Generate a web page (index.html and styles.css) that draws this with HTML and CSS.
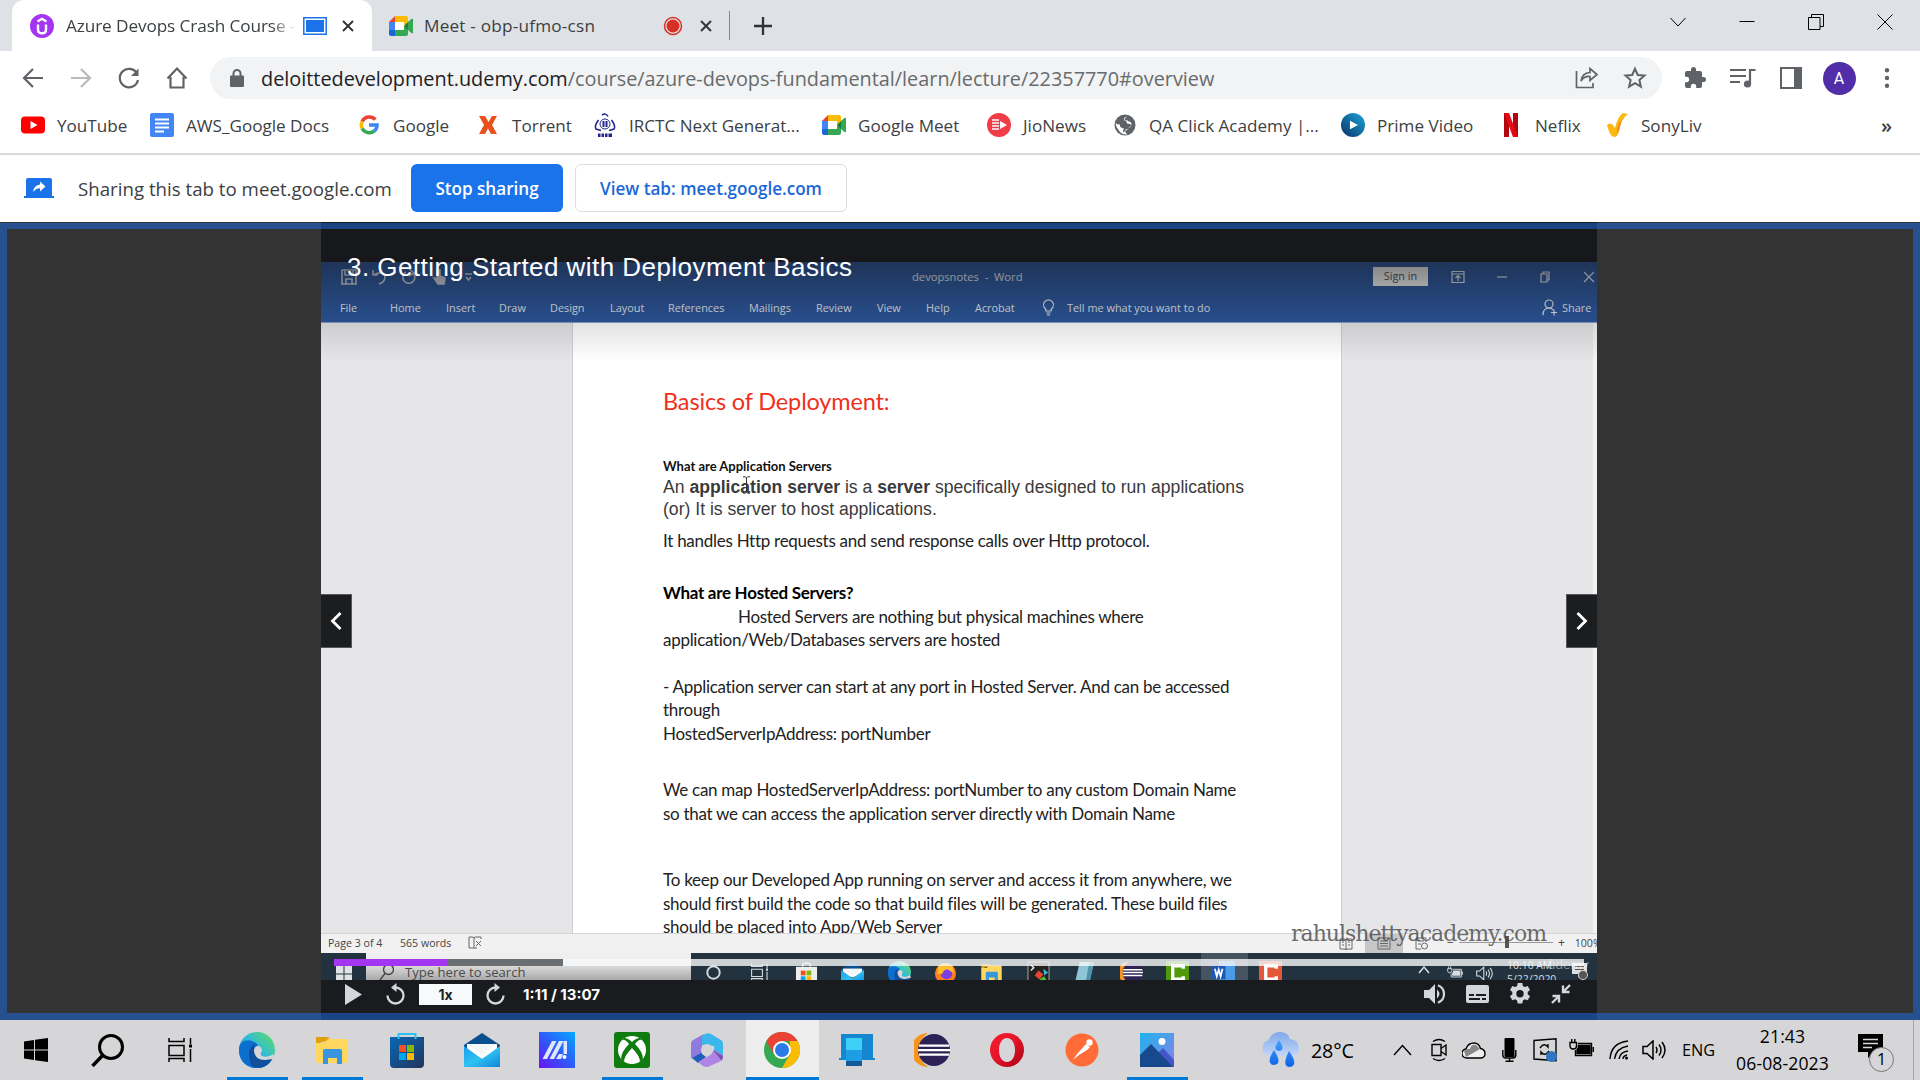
FILE: index.html
```html
<!DOCTYPE html>
<html lang="en">
<head>
<meta charset="utf-8">
<title>Azure Devops Crash Course</title>
<link rel="stylesheet" href="styles.css">
</head>
<body>
<svg class="defs" aria-hidden="true">
  <defs>
    <linearGradient id="gEdge" x1="0" y1="1" x2="1" y2="0"><stop offset="0" stop-color="#0f7ad8"/><stop offset=".5" stop-color="#2fb9e0"/><stop offset="1" stop-color="#5de05a"/></linearGradient>
    <linearGradient id="gStore" x1="0" y1="0" x2="1" y2="1"><stop offset="0" stop-color="#0a67b5"/><stop offset="1" stop-color="#22355c"/></linearGradient>
    <linearGradient id="gMail" x1="0" y1="0" x2="1" y2="1"><stop offset="0" stop-color="#1a9de6"/><stop offset=".5" stop-color="#2fc2f4"/><stop offset="1" stop-color="#1283da"/></linearGradient>
    <linearGradient id="gAsus" x1="0" y1="1" x2="1" y2="0"><stop offset="0" stop-color="#6a12f5"/><stop offset=".5" stop-color="#2d5cf8"/><stop offset="1" stop-color="#05a8ff"/></linearGradient>
    <linearGradient id="gOpera" x1="0" y1="0" x2="1" y2="1"><stop offset="0" stop-color="#ff1b2d"/><stop offset=".5" stop-color="#e0142a"/><stop offset="1" stop-color="#a70014"/></linearGradient>
    <linearGradient id="gPrime" x1="1" y1="0" x2="0" y2="1"><stop offset="0" stop-color="#1ba8dc"/><stop offset="1" stop-color="#0b2f66"/></linearGradient>
    <linearGradient id="gPhoto" x1="0" y1="0" x2="1" y2="1"><stop offset="0" stop-color="#1fb4ef"/><stop offset="1" stop-color="#8a7fe0"/></linearGradient>
    <linearGradient id="gDrop" x1="0" y1="0" x2="0" y2="1"><stop offset="0" stop-color="#4aa0ff"/><stop offset="1" stop-color="#0a63e8"/></linearGradient>
    <linearGradient id="gCloud" x1="0" y1="0" x2="0" y2="1"><stop offset="0" stop-color="#7fa9ea"/><stop offset="1" stop-color="#c3d6f7"/></linearGradient>
    <symbol id="meet" viewBox="0 0 24 20"><path fill="#ea4335" d="M0 6 6 0v6z"/><path fill="#fbbc04" d="M6 0h11a2 2 0 0 1 2 2v5l-4 3V6H6z"/><path fill="#4285f4" d="M0 6h6v8H0z"/><path fill="#1967d2" d="M0 14h6v6H2a2 2 0 0 1-2-2z"/><path fill="#34a853" d="M6 14h9v-4l4 3v5a2 2 0 0 1-2 2H6zM19 6l3.300-2.900Q24 2 24 3.500v13q0 1.500-1.700.4L19 14z"/><path fill="#188038" d="m15 10 4-4v8z"/><path fill="#fff" d="M6 6h9v8H6z"/></symbol>
    <symbol id="edge" viewBox="0 0 36 36"><circle cx="18" cy="18" r="18" fill="url(#gEdge)"/><path fill="#0c6fd0" d="M0 18C0 9 8 7 13 9c8 3 7 7 3 11-3 6 2 12 8 12 4 0 6-2 8-4-5 9-16 10-23 6C3 31 0 25 0 18z"/><path fill="#114f9c" d="M10 22c0-5 3-9 6-10-3 7 1 15 9 15 4 0 6-2 8 0-4 8-13 11-20 7-2-3-3-7-3-12z"/><path fill="#d5d5d7" d="M15 18c0-2 2-4 4-4s4 2 4 4-2 3-1 5c2 3 9 2 12-1l2 4-3 1c-2 0-4 1-7 1-8 0-11-5-11-10z"/></symbol>
    <symbol id="folder" viewBox="0 0 36 36"><path fill="#e0a106" d="M2 5h12l3 4h-5L2 12z"/><path fill="#ffd75e" d="M2 11h8l4-4h18q2 0 2 2v20q0 2-2 2H4q-2 0-2-2z"/><path fill="#3896e0" d="M9 19q0-2 2-2h15q2 0 2 2v13h-5v-6h-9v6H9z"/></symbol>
    <symbol id="taskview" viewBox="0 0 24 24"><path fill="none" stroke="currentColor" stroke-width="1.500" d="M1 0v3.500h15V0M1 7.500h15v10H1zM1 24v-3.500h15V24M22.500 0v6M22.500 11v13"/><path fill="currentColor" d="M21 6.500h3v3h-3z"/></symbol>
    <symbol id="win" viewBox="0 0 24 24"><path fill="currentColor" d="M0 3.500 10 2v9.500H0zM11 1.800 24 0v11.500H11zM0 12.500h10V22L0 20.500zM11 12.500h13V24l-13-1.800z"/></symbol>
    <symbol id="search" viewBox="0 0 33 33"><circle cx="20" cy="13" r="11.500" fill="none" stroke="currentColor" stroke-width="3"/><path stroke="currentColor" stroke-width="3.400" d="M12 21 1.500 32"/></symbol>
    <symbol id="mail" viewBox="0 0 36 34"><path fill="#0c4f8f" d="M0 12 18 0l18 12v4H0z"/><path fill="#fff" d="M3 11h30v8L18 25 3 19z"/><path fill="url(#gMail)" d="m0 13 18 13 18-13v21H0z"/><path fill="#f4f6f8" d="M4 11h28L18 22z"/></symbol>
    <symbol id="speaker" viewBox="0 0 24 20"><path fill="none" stroke="currentColor" stroke-width="1.500" d="M1 6.500h4L11 1v18l-6-5.500H1zM14 7q2 3 0 6M17 4.500q4 5.500 0 11M20 2q6 8 0 16"/></symbol>
    <symbol id="battery" viewBox="0 0 25 19"><path fill="none" stroke="currentColor" stroke-width="1.400" d="M9 4.500h13.500v12H6.500V11M24.300 8v5M1 3.500h6.500v3.500q0 3-3.200 3T1 7zM2.700 0v3.500M5.800 0v3.500"/><path fill="currentColor" d="M9.500 6.500h11.500v8H8v-4q2-1.500 1.500-4z"/></symbol>
    <symbol id="eclipse" viewBox="0 0 36 36"><path fill="#f7941e" d="M14 1a17 17 0 0 0 0 34q-9-6-9-17t9-17z"/><circle cx="20" cy="18" r="16" fill="#2c2255"/><path fill="#fff" d="M5 12.500h30v2.200H5zM4 17h32v2.200H4zM5 21.500h30v2.200H5z"/></symbol>
  </defs>
</svg>

<header class="tabstrip">
  <div class="tab tab-active">
    <svg class="i24" viewBox="0 0 24 24"><circle cx="12" cy="12" r="12" fill="#a435f0"/><path fill="none" stroke="#fff" stroke-width="2.400" d="M8 10.500v5q0 3.800 4 3.800t4-3.800v-5M7.500 7.500 12 4.800l4.500 2.700"/></svg>
    <span class="tab-name tab-fade">Azure Devops Crash Course -</span>
    <svg class="tab-state" viewBox="0 0 24 18" width="24" height="18"><path fill="#fff" stroke="#1a73e8" stroke-width="1.500" d="M.8.8h22.400v16.400H.8z"/><path fill="#1a73e8" d="M3 3h18v12H3z"/></svg>
    <svg class="tab-x" viewBox="0 0 12 12"><path d="m1 1 10 10M11 1 1 11"/></svg>
  </div>
  <div class="tab tab-idle">
    <svg width="24" height="20"><use href="#meet"/></svg>
    <span class="tab-name">Meet - obp-ufmo-csn</span>
    <svg width="20" height="20" viewBox="0 0 20 20"><circle cx="10" cy="10" r="8.500" fill="none" stroke="#d93025" stroke-width="1.500"/><circle cx="10" cy="10" r="6.500" fill="#d93025"/></svg>
    <svg class="tab-x" viewBox="0 0 12 12"><path d="m1 1 10 10M11 1 1 11"/></svg>
  </div>
  <svg class="new-tab" viewBox="0 0 18 18"><path d="M9 0v18M0 9h18"/></svg>
  <div class="window-buttons">
    <svg width="16" height="16" viewBox="0 0 16 16"><path d="m.5 4 7.500 8 7.500-8"/></svg>
    <svg width="16" height="16" viewBox="0 0 16 16"><path d="M.5 7.500h15"/></svg>
    <svg width="16" height="16" viewBox="0 0 16 16"><path d="M.5 3.500h11.500v12H.5zM3.500 3.500v-3h12v12H12"/></svg>
    <svg width="16" height="16" viewBox="0 0 16 16"><path d="m.5.5 15 15M15.500.5l-15 15"/></svg>
  </div>
</header>

<div class="toolbar">
  <div class="nav">
    <svg viewBox="0 0 24 24"><path d="M22 12H3M12 3l-9 9 9 9"/></svg>
    <svg class="dim" viewBox="0 0 24 24"><path d="M2 12h19M12 3l9 9-9 9"/></svg>
    <svg viewBox="0 0 24 24"><path d="M20 7.500A9.200 9.200 0 1 0 21 14"/><path d="M21.500 2.500v7.500h-7.500z" fill="#5f6368" stroke="none"/></svg>
    <svg viewBox="0 0 24 24"><path d="M5.500 11v10.500h13V11M2.500 12.500 12 2.500l9.500 10"/></svg>
  </div>
  <div class="omnibox">
    <svg width="14" height="18" viewBox="0 0 14 18"><path fill="#5f6368" d="M1 6.500h12q1 0 1 1V17q0 1-1 1H1q-1 0-1-1V7.500q0-1 1-1z"/><path fill="none" stroke="#5f6368" stroke-width="2" d="M3.500 7V4.500a3.500 3.500 0 0 1 7 0V7"/></svg>
    <span class="url"><b>deloittedevelopment.udemy.com</b>/course/azure-devops-fundamental/learn/lecture/22357770#overview</span>
    <svg class="o-share" width="24" height="24" viewBox="0 0 24 24"><path d="M1.500 5v16.500H18V17M6 15q1-8 9-8.500V2.500l7 6-7 6v-4Q9 10 6 15z"/></svg>
    <svg class="o-star" width="24" height="24" viewBox="0 0 24 24"><path d="m12 2.800 2.800 6.200 6.700.6-5.100 4.500 1.500 6.600L12 17.200l-5.900 3.500 1.500-6.600-5.100-4.500 6.700-.6z"/></svg>
  </div>
  <div class="actions">
    <svg width="24" height="24" viewBox="0 0 24 24"><path fill="#5f6368" d="M20.500 11H19V7a2 2 0 0 0-2-2h-4V3.500a2.500 2.500 0 0 0-5 0V5H4a2 2 0 0 0-2 2v3.800h1.500a2.700 2.700 0 0 1 0 5.400H2V20c0 1.100.9 2 2 2h3.800v-1.500a2.700 2.700 0 0 1 5.400 0V22H17a2 2 0 0 0 2-2v-4h1.500a2.500 2.500 0 0 0 0-5z"/></svg>
    <svg width="26" height="22" viewBox="0 0 26 22"><path fill="none" stroke="#5f6368" stroke-width="2.200" d="M0 3h16M0 9h16M0 15h10M20 17V3h5.500"/><circle cx="17.500" cy="17" r="3.600" fill="#5f6368"/></svg>
    <svg width="22" height="22" viewBox="0 0 22 22"><path fill="none" stroke="#5f6368" stroke-width="2" d="M1 1h20v20H1z"/><path fill="#5f6368" d="M14 1h7v20h-7z"/></svg>
    <span class="avatar">A</span>
    <svg width="6" height="20" viewBox="0 0 6 20"><g fill="#5f6368"><circle cx="3" cy="2.300" r="2.200"/><circle cx="3" cy="10" r="2.200"/><circle cx="3" cy="17.700" r="2.200"/></g></svg>
  </div>
</div>

<nav class="bookmarks">
  <a><svg class="i24" viewBox="0 0 24 24"><rect y="3.500" width="24" height="17" rx="4" fill="#f00"/><path fill="#fff" d="m9.500 8 7 4-7 4z"/></svg>YouTube</a>
  <a><svg class="i24" viewBox="0 0 24 24"><rect width="24" height="24" rx="2" fill="#4285f4"/><path stroke="#fff" stroke-width="2" d="M5 6.500h14M5 10.500h14M5 14.500h14M5 18.500h9"/></svg>AWS_Google Docs</a>
  <a><svg class="i24" viewBox="0 0 24 24"><g fill="none" stroke-width="3.600"><path stroke="#ea4335" d="M18.300 6.600A8 8 0 0 0 5.200 8.500"/><path stroke="#fbbc05" d="M5.200 8.500a8 8 0 0 0 0 7"/><path stroke="#34a853" d="M5.200 15.500a8 8 0 0 0 12 2.500"/><path stroke="#4285f4" d="M12 12h8q0 4-2.800 6"/></g></svg>Google</a>
  <a><svg class="i24" viewBox="0 0 24 24"><path fill="#e8501c" d="M3 3h6l3.500 6L16 3h5l-5 9 5 9h-6l-3-5.500L9 21H3l5-9z"/></svg>Torrent</a>
  <a><svg class="i24" viewBox="0 0 24 24"><g fill="none" stroke="#23238e" stroke-width="1.500"><path d="M9 2q4-2.500 6 1.500M5.500 7Q1 13 3 16l5 1.500M18.500 7Q23 13 21 16l-5 1.500"/><circle cx="12" cy="11" r="5" stroke-width="1"/></g><path fill="#23238e" d="M9.500 8h2v6h-2zM12.500 8h2v6h-2zM5 20.500h2.500V24H5zM8.500 20.500H11V24H8.500zM12 20.500h2.500V24H12zM15.500 20.500H19V24h-3.500z"/></svg>IRCTC Next Generat...</a>
  <a><svg class="i24" viewBox="0 -2 24 24"><use href="#meet" width="24" height="20"/></svg>Google Meet</a>
  <a><svg class="i24" viewBox="0 0 24 24"><circle cx="12" cy="12" r="12" fill="#f23c48"/><path stroke="#fff" stroke-width="1.500" d="M5 7h7M5 10h7M5 13h7M5 16h7"/><path fill="#fff" d="m13 8 7 4-7 4z"/></svg>JioNews</a>
  <a><svg class="i24" viewBox="0 0 24 24"><circle cx="12" cy="12" r="10.500" fill="#5f6368"/><path fill="#fff" d="M14 3.500q-4 1-3 4 3 0 3 3 4 0 4 2-4 5-8 7 0-3 1-4-5-1-4-4-3 0-4.500-1.500Q3 14 5.500 17q3 5 9 4.500-3-2-2-5 5-1 6-5 0-3-3-3-1-2-4-1 0-2 2.500-4z"/></svg>QA Click Academy |...</a>
  <a><svg class="i24" viewBox="0 0 24 24"><circle cx="12" cy="12" r="12" fill="url(#gPrime)"/><path fill="#fff" d="m9 7.800 8 4.200-8 4.200z"/></svg>Prime Video</a>
  <a><svg class="i24" viewBox="0 0 24 24"><path fill="#b1060f" d="M5 0h5v24H5zM14 0h5v24h-5z"/><path fill="#e50914" d="M5 0h5l9 24h-5z"/></svg>Neflix</a>
  <a><svg class="i24" viewBox="0 0 24 24"><path fill="#fbb811" d="M2 12q3-3 6 0l2 3Q13 3 18 0l5 1q-7 5-9 17-1 6-5 6t-7-12z"/><path fill="#f28a1b" d="M14 10q4-3 5-6-3 3-5 14l-2 2q0-6 2-10z"/></svg>SonyLiv</a>
  <span class="more">»</span>
</nav>

<div class="sharebar">
  <svg width="30" height="20" viewBox="0 0 30 20"><path fill="#1a73e8" d="M4 0h22q2 0 2 2v16h2v2H0v-2h2V2q0-2 2-2z"/><path fill="#fff" d="M9 14q1-7 7-7.500V3.500l5.500 5-5.500 5v-3.300Q12 10 9 14z"/></svg>
  <span class="share-text">Sharing this tab to meet.google.com</span>
  <button class="btn btn-stop">Stop sharing</button>
  <button class="btn btn-view">View tab: meet.google.com</button>
</div>

<main class="stage">
  <section class="player">
    <div class="letterbox"></div>
    <div class="word">
      <div class="word-title">
        <div class="quick">
          <svg viewBox="0 0 16 16"><path d="M1 1h14v14H1zM4 1v5h8V1M5 15v-5h6v5"/></svg>
          <svg viewBox="0 0 16 16"><path d="M2 1v5h5M2 6q11-5 12 2 0 5-6 7"/></svg>
          <svg viewBox="0 0 16 16"><path d="M5 3a6 6 0 1 0 7 1M8 0l5 4-5 3"/></svg>
          <svg viewBox="0 0 16 16"><path fill="#c8cdd8" d="M6 1h3v6l5 2-1 6H7L3 9l3 1z"/></svg>
          <svg viewBox="0 0 16 16"><path d="M4 5h7M5 8l2.500 3L10 8"/></svg>
        </div>
        <span class="word-doc">devopsnotes&nbsp; - &nbsp;Word</span>
        <span class="signin">Sign in</span>
        <div class="word-buttons">
          <svg viewBox="0 0 14 14"><path d="M1 1.500h12v11H1zM1 4h12M7 11V6M4.500 8 7 5.500 9.500 8"/></svg>
          <svg viewBox="0 0 14 14"><path d="M2 7h10"/></svg>
          <svg viewBox="0 0 14 14"><path d="M3 4h6v8H3zM5 4V2h6v8H9"/></svg>
          <svg viewBox="0 0 14 14"><path d="m2 2 10 10M12 2 2 12"/></svg>
        </div>
      </div>
      <div class="ribbon">
        <span>File</span><span>Home</span><span>Insert</span><span>Draw</span><span>Design</span><span>Layout</span><span>References</span><span>Mailings</span><span>Review</span><span>View</span><span>Help</span><span>Acrobat</span>
        <svg width="13" height="17" viewBox="0 0 13 17"><path d="M4 12q0-2-2-4a5 5 0 1 1 9 0q-2 2-2 4zM4.500 14h4M5 16h3"/></svg>
        <span>Tell me what you want to do</span>
        <svg width="16" height="17" viewBox="0 0 16 17"><circle cx="7" cy="5" r="4"/><path d="M1 16q0-7 6-7 3 0 4 2M9 13.500h6M12 10.500v6"/></svg>
        <span>Share</span>
      </div>
    </div>

    <div class="desk">
      <article class="page">
        <h1>Basics of Deployment:</h1>
        <h3>What are Application Servers</h3>
        <p class="arial">An <b>application server</b> is a <b>server</b> specifically designed to run applications<br>(or) It is server to host applications.</p>
        <p class="after-arial">It handles Http requests and send response calls over Http protocol.</p>
        <h2>What are Hosted Servers?</h2>
        <p class="indented">Hosted Servers are nothing but physical machines where<br>application/Web/Databases servers are hosted</p>
        <p class="ports">- Application server can start at any port in Hosted Server. And can be accessed<br>through<br>HostedServerIpAddress: portNumber</p>
        <p class="domain">We can map HostedServerIpAddress: portNumber to any custom Domain Name<br>so that we can access the application server directly with Domain Name</p>
        <p class="build">To keep our Developed App running on server and access it from anywhere, we<br>should first build the code so that build files will be generated. These build files<br>should be placed into App/Web Server</p>
        <svg class="ibeam" width="9" height="18" viewBox="0 0 9 18"><path d="M1 .8h2.500l1 1 1-1H8M4.500 1.500v15M1 17.200h2.500l1-1 1 1H8"/></svg>
      </article>
    </div>

    <div class="word-status">
      <span class="pages">Page 3 of 4</span><span class="words">565 words</span>
      <svg width="14" height="13" viewBox="0 0 14 13"><path d="M6 2v10H1V1h4l1 1 1-1h6v2M6 12h3M8 5l5 5M13 5l-5 5"/></svg>
      <div class="views">
        <span><svg width="14" height="12" viewBox="0 0 14 12"><path d="M1 1h5l1 1 1-1h5v10H8l-1 1-1-1H1zM7 2v9M3 4h2M3 7h2M9 4h2M9 7h2"/></svg></span>
        <span class="view-on"><svg width="14" height="13" viewBox="0 0 14 13"><path d="M1 1h12v11H1zM3 4h8M3 6.500h8M3 9h8"/></svg></span>
        <span><svg width="14" height="13" viewBox="0 0 14 13"><path d="M6 12H1V1h10v4M3 4h6M3 7h3"/><circle cx="9.500" cy="9" r="3"/></svg></span>
      </div>
      <div class="zoom"><span>−</span><i class="track"><i class="thumb"></i></i><span>+</span><span class="pct">100%</span></div>
    </div>

    <div class="inner-bar">
      <div class="inner-start"><svg width="16" height="16" viewBox="0 0 16 16"><path fill="#dfe3e6" d="M0 0h7.500v7.500H0zM8.500 0H16v7.500H8.500zM0 8.500h7.500V16H0zM8.500 8.500H16V16H8.500z"/></svg></div>
      <div class="inner-search"><svg width="15" height="17" viewBox="0 0 15 17"><circle cx="9.500" cy="5.500" r="5"/><path d="M6 9.500 1 16"/></svg>Type here to search</div>
      <div class="inner-apps">
        <span><svg viewBox="0 0 24 24"><circle cx="12" cy="12" r="6.500" fill="none" stroke="#d5dade" stroke-width="2"/></svg></span>
        <span class="pale"><svg viewBox="-4 -4 32 32"><use href="#taskview" width="24" height="24"/></svg></span>
        <span><svg viewBox="0 0 24 24"><path fill="none" stroke="#ddd" stroke-width="1.500" d="M8 6V4q0-2 4-2t4 2v2"/><path fill="#eee" d="M1 6h22v18H1z"/><path fill="#f25022" d="M6 10h5v5H6z"/><path fill="#7fba00" d="M12 10h5v5h-5z"/><path fill="#00a4ef" d="M6 16h5v5H6z"/><path fill="#ffb900" d="M12 16h5v5h-5z"/></svg></span>
        <span><svg viewBox="0 0 36 34"><use href="#mail"/></svg></span>
        <span><svg viewBox="0 0 36 36"><use href="#edge"/></svg></span>
        <span><svg viewBox="0 0 24 24"><circle cx="12" cy="13" r="11" fill="#ff7b1f"/><circle cx="13" cy="13" r="6" fill="#7a3fe0"/><path fill="#ffbd2e" d="M5 5q7-6 14 0l2 8-6-4q-5-1-6 4l-6 1z"/></svg></span>
        <span><svg viewBox="0 0 36 36"><use href="#folder"/></svg></span>
        <span><svg viewBox="0 0 24 24"><path fill="#222" stroke="#aaa" d="M1 1h22v20H1z"/><path stroke="#eee" stroke-width="1.500" fill="none" d="m4 4 3 3-3 3"/><path fill="#e43" d="m12 10 5 4-4 5-5-4z"/><path fill="#3bd" d="m17 8 5 4-4 3z"/><path fill="#5b3" d="m13 19 5-3 3 5-4 3z"/></svg></span>
        <span><svg viewBox="0 0 24 24"><path fill="#8fc6d6" d="M7 1h15l-5 22H2z"/><path fill="#4f93ab" d="m17 1 5 0-5 22h-4z"/></svg></span>
        <span><svg viewBox="0 0 36 36"><use href="#eclipse"/></svg></span>
        <span><svg viewBox="0 0 24 24"><path fill="#4f9a0b" d="M0 0h24v24H0z"/><path fill="none" stroke="#fff" stroke-width="3.500" d="M18 8V5H7v14h11v-3"/></svg></span>
        <span class="inner-on"><svg viewBox="0 0 24 24"><path fill="#4a9be8" d="M7 0h17v24H7z"/><path fill="#1b57b3" d="M0 5h14v14H0z"/><path fill="none" stroke="#fff" stroke-width="1.800" d="m3 8 2 8 2-7 2 7 2-8"/></svg></span>
        <span><svg viewBox="0 0 24 24"><path fill="#e4583a" d="M0 0h24v24H0z"/><path fill="none" stroke="#fff" stroke-width="3.500" d="M18 8V5H7v14h11v-3"/></svg></span>
      </div>
      <div class="inner-tray">
        <svg width="12" height="8" viewBox="0 0 12 8"><path fill="none" stroke="currentColor" stroke-width="1.500" d="m1 7 5-6 5 6"/></svg>
        <svg width="16" height="13"><use href="#battery"/></svg>
        <svg width="17" height="15"><use href="#speaker"/></svg>
        <div class="inner-clock">10:10 AM<br>5/22/2020</div>
        <svg class="inner-notes" width="16" height="18" viewBox="0 0 16 18"><path fill="#ddd" d="M0 0h15v11H9l-3 4v-4H0z"/><path stroke="#555" d="M3 3.500h9M3 6.500h9"/><circle cx="11" cy="12" r="4.500" fill="#555" stroke="#ccc"/></svg>
      </div>
    </div>

    <div class="controls">
      <svg width="17" height="21" viewBox="0 0 17 21"><path fill="#d1d7dc" d="m0 0 17 10.500L0 21z"/></svg>
      <svg class="ring" width="19" height="22" viewBox="0 0 19 22"><path d="M1.500 12.500a8 8 0 1 0 8-8"/><path class="tip" d="M10.500 0v9L5 4.500z"/></svg>
      <span class="rate">1x</span>
      <svg class="ring ring-fwd" width="19" height="22" viewBox="0 0 19 22"><path d="M17.500 12.500a8 8 0 1 1-8-8"/><path class="tip" d="M8.500 0v9L14 4.500z"/></svg>
      <span class="elapsed">1:11 / 13:07</span>
      <div class="controls-right">
        <svg width="22" height="20" viewBox="0 0 22 20"><path fill="#d1d7dc" d="M0 6h5l6-6v20l-6-6H0zM13 5.500q5 4.500 0 9z"/><path fill="none" stroke="#d1d7dc" stroke-width="2.200" d="M14 1.300q6 2.500 6 8.700t-6 8.700"/></svg>
        <svg width="23" height="18" viewBox="0 0 23 18"><rect width="23" height="18" rx="2" fill="#d1d7dc"/><path stroke="#1c1d1f" stroke-width="2" d="M3 10h5M10 10h10M3 14h11M16 14h4"/></svg>
        <svg width="22" height="22" viewBox="0 0 22 22"><path fill="#d1d7dc" fill-rule="evenodd" d="M8.700 0h4.600l.6 3 1.900 1.100 2.900-1 2.300 4-2.300 2v2.200l2.300 2-2.300 4-2.900-1-1.900 1.100-.6 3H8.700l-.6-3-1.900-1.100-2.900 1-2.300-4 2.300-2V9.100L1 7.100l2.300-4 2.900 1L8.100 3zM11 7a3.700 3.700 0 1 0 0 7.400A3.700 3.700 0 0 0 11 7z"/></svg>
        <svg width="20" height="20" viewBox="0 0 20 20"><path fill="none" stroke="#d1d7dc" stroke-width="2.400" d="m19 1-6 6M12 1.500V8h6.500M1 19l6-6M1.500 12H8v6.500"/></svg>
      </div>
    </div>

    <div class="shade"></div>
    <h2 class="lecture">3. Getting Started with Deployment Basics</h2>
    <button class="arrow arrow-prev"><svg width="12" height="18" viewBox="0 0 12 18"><path d="m10.500 1-8 8 8 8"/></svg></button>
    <button class="arrow arrow-next"><svg width="12" height="18" viewBox="0 0 12 18"><path d="m1.500 1 8 8-8 8"/></svg></button>
    <div class="watermark">rahulshettyacademy.com</div>
    <div class="brand">ûdemy</div>
    <div class="progress"><i class="played"></i><i class="buffered"></i></div>
  </section>
  <div class="capture-frame"></div>
</main>

<footer class="taskbar">
  <div class="app"><svg width="24" height="24"><use href="#win"/></svg></div>
  <div class="app"><svg width="33" height="33"><use href="#search"/></svg></div>
  <div class="app"><svg width="24" height="24"><use href="#taskview"/></svg></div>
  <div class="app run"><svg width="36" height="36"><use href="#edge"/></svg></div>
  <div class="app run"><svg width="36" height="36"><use href="#folder"/></svg></div>
  <div class="app"><svg width="36" height="36" viewBox="0 0 36 36"><path fill="url(#gStore)" d="M1 5h34v27q0 4-4 4H5q-4 0-4-4z"/><path fill="none" stroke="#2cc3f3" stroke-width="2" d="M9.500 7V2h17v5"/><path fill="#f25022" d="M10 13h7v7h-7z"/><path fill="#7fba00" d="M18 13h7v7h-7z"/><path fill="#00a4ef" d="M10 21h7v7h-7z"/><path fill="#ffb900" d="M18 21h7v7h-7z"/></svg></div>
  <div class="app"><svg width="36" height="34"><use href="#mail"/></svg></div>
  <div class="app"><svg width="36" height="36" viewBox="0 0 36 36"><path fill="url(#gAsus)" d="M0 0h36v36H0z"/><path fill="#dfe6ff" d="M13 9h4.500L8 27H3.500zM20 9h4.500L15 27h-4.500zM24.500 9H28v13h-3.500zM17 27l3-5h4l-2 5z"/><circle cx="25.500" cy="25" r="2" fill="#fff"/></svg></div>
  <div class="app run"><svg width="36" height="36" viewBox="0 0 36 36"><rect width="36" height="36" rx="3" fill="#107c10"/><circle cx="18" cy="18" r="14" fill="#fff"/><path fill="#107c10" d="M10 6q4 0 8 4 4-4 8-4l2 2q-3-1-7 4 8 8 8 15l-3 3q0-6-8-14-8 8-8 14l-3-3q0-7 8-15-4-5-7-4z"/></svg></div>
  <div class="app"><svg width="34" height="34" viewBox="0 0 34 34"><path fill="#8f7be0" d="M14 1 3 7q-2 1-2 4v14l9 3 2-6V8z"/><path fill="#3cb7ec" d="M12 3q4-4 9-2l10 6q2 1 2 4v13l-9-6V13l-12-1z"/><path fill="#1c5fb8" d="m2 25 9-5 5 4-8 6z"/><path fill="#b083e6" d="m8 29 9-5 7-7 9 5v2q0 3-2 4l-11 5q-3 2-7 0z"/><path fill="#7a55ae" d="m23 17 10 6q0 3-2 4z"/><circle cx="17" cy="17" r="6" fill="#d5d5d7"/></svg></div>
  <div class="app app-focus"><svg width="36" height="36" viewBox="0 0 36 36"><circle cx="18" cy="18" r="18" fill="#34a853"/><path fill="#ea4335" d="M2.400 9A18 18 0 0 1 33.600 9H18l-8 13.500z"/><path fill="#fbbc04" d="M33.600 9A18 18 0 0 1 18 36l7.800-13.500V9z"/><circle cx="18" cy="18" r="9" fill="#fff"/><circle cx="18" cy="18" r="7" fill="#2a7ae8"/></svg></div>
  <div class="app"><svg width="36" height="34" viewBox="0 0 36 34"><path fill="#1487d0" d="M2 1h32v24h2v2H0v-2h2z"/><path fill="#1d9ee4" d="M7 5h16v28H7z"/><path fill="#3fd0f7" d="M7 5h16v12H7z"/><path fill="#145a98" d="M7 28h16v5H7z"/></svg></div>
  <div class="app"><svg width="36" height="36"><use href="#eclipse"/></svg></div>
  <div class="app"><svg width="36" height="36" viewBox="0 0 36 36"><path fill="url(#gOpera)" fill-rule="evenodd" d="M18 1a17 17 0 1 1 0 34 17 17 0 0 1 0-34zm0 5c-5 0-8 5-8 12s3 12 8 12 8-5 8-12-3-12-8-12z"/></svg></div>
  <div class="app"><svg width="34" height="34" viewBox="0 0 34 34"><circle cx="17" cy="17" r="16.500" fill="#ff6c37"/><circle cx="24.500" cy="9.500" r="3.200" fill="#fff"/><path fill="#fff" d="m21 11 4 3-3 3-8 5-6 5 4-6z"/></svg></div>
  <div class="app run"><svg width="34" height="34" viewBox="0 0 34 34"><path fill="url(#gPhoto)" d="M0 0h34v34H0z"/><path fill="#4357c8" d="m14 24 9-9 11 12v7H14z"/><path fill="#164a8c" d="m0 22 11-11 22 23H0z"/><circle cx="22" cy="8.500" r="3.500" fill="#fff"/></svg></div>

  <div class="weather"><svg width="38" height="36" viewBox="0 0 38 36"><path fill="url(#gCloud)" d="M8 24a8 8 0 0 1-1-15.500Q11 0 19 0q8 0 10 7 9 1 9 9t-8 8z"/><g fill="url(#gDrop)"><path d="M18 8q7 10 0 11-7-1 0-11zM13 18q9 14 0 15-9-1 0-15zM28 19q10 14 1 16-9 0-1-16z"/></g></svg><span>28°C</span></div>
  <div class="tray">
    <svg class="t1" width="19" height="12" viewBox="0 0 19 12"><path d="m1 11 8.500-9.500L18 11"/></svg>
    <svg class="t2" width="18" height="24" viewBox="0 0 18 24"><path d="M2 6.500h9v11H2zM11 10.500l5-3.500v10l-5-3.500M3 3.500q6-4 12 0M3 20.500q6 4 12 0"/></svg>
    <svg class="t3" width="24" height="17" viewBox="0 0 24 17"><path fill="#eee" d="M5 16a4.500 4.500 0 0 1-1-9Q6 1 12 1q5 0 6.500 5.500Q23 7.500 23 11.500T19 16z"/><path fill="#888" stroke="none" d="M2 9q3-3 6-2 1-5 6-4l4 4-14 8z"/></svg>
    <svg class="t4" width="15" height="24" viewBox="0 0 15 24"><rect x="2.500" width="10" height="19" rx="1" fill="#000" stroke="none"/><path d="M.8 12v5q0 3 3 3h7q3 0 3-3v-5M7.500 20v3M3.500 23.200h8"/></svg>
    <svg class="t5" width="24" height="24" viewBox="0 0 24 24"><path d="M1 2.500 23 .8v22L1 21zM7 10q4-6 8-1V6M16 13q-4 6-8 1v3"/><circle cx="18.500" cy="18.500" r="5.500" fill="#2f76c0" stroke="none"/></svg>
    <svg class="t6" width="25" height="19"><use href="#battery"/></svg>
    <svg class="t7" width="20" height="20" viewBox="0 0 20 20"><path d="M1 19Q2 3 19 1M5.500 19Q7 8 19 6M10 19q1-7 9-8M14 19q0-3 4-4"/><circle cx="17.500" cy="18" r="1.500" fill="#000" stroke="none"/></svg>
    <svg class="t8" width="24" height="20"><use href="#speaker"/></svg>
    <span class="lang">ENG</span>
    <div class="clock">21:43<br>06-08-2023</div>
    <div class="notes"><svg width="25" height="24" viewBox="0 0 25 24"><path fill="#000" d="M0 0h25v18h-9l-6 6v-6H0z"/><path stroke="#d8d8da" stroke-width="1.500" d="M5 5.500h15M5 9.500h15M5 13.500h9"/></svg><span class="count">1</span></div>
  </div>
</footer>
</body>
</html>
```
FILE: styles.css
```css
* { box-sizing: border-box; }

body {
  margin: 0;
  width: 1920px;
  height: 1080px;
  overflow: hidden;
  background: #fff;
  color: #3c4043;
  font-family: "Open Sans", "Noto Sans", sans-serif;
  display: flex;
  flex-direction: column;
}

svg { flex: none; display: block; }
button { font-family: inherit; padding: 0; border: 0; }
.defs { position: absolute; width: 0; height: 0; }
.i24 { width: 24px; height: 24px; }

/* Tab strip */
.tabstrip { height: 51px; flex: none; display: flex; background: #dee1e6; padding-left: 12px; }
.tab { display: flex; align-items: center; font-size: 17.2px; white-space: nowrap; }
.tab-active { width: 360px; background: #fff; border-radius: 12px 12px 0 0; padding-left: 18px; }
.tab-active .tab-name { width: 231px; margin-left: 12px; overflow: hidden; letter-spacing: -.1px; }
.tab-fade { -webkit-mask-image: linear-gradient(90deg, #000 205px, transparent 230px); mask-image: linear-gradient(90deg, #000 205px, transparent 230px); }
.tab-state { margin-left: 6px; }
.tab-active .tab-x { margin-left: 15px; }
.tab-x { width: 12px; height: 12px; stroke: #303336; stroke-width: 1.9; fill: none; }
.tab-idle { width: 358px; padding-left: 17px; }
.tab-idle .tab-name { margin-left: 11px; width: 239px; letter-spacing: .2px; }
.tab-idle .tab-x { margin-left: 17px; }
.tab-idle::after { content: ""; width: 1px; height: 29px; background: #85888c; margin-left: 17px; }
.new-tab { width: 18px; height: 18px; margin: 17px 0 0 24px; stroke: #303336; stroke-width: 2.3; }
.window-buttons { margin-left: auto; display: flex; gap: 53px; padding: 14px 27px 0 0; }
.window-buttons svg { fill: none; stroke: #000; stroke-width: 1; }

/* Toolbar */
.toolbar { height: 51px; flex: none; display: flex; align-items: center; padding-top: 3px; }
.nav { display: flex; gap: 24px; padding-left: 21px; }
.nav svg { width: 24px; height: 24px; fill: none; stroke: #5f6368; stroke-width: 2.2; }
.nav .dim { stroke: #bababd; }
.omnibox { width: 1452px; height: 42px; margin-left: 21px; border-radius: 21px; background: #f1f3f4; display: flex; align-items: center; padding-left: 20px; }
.url { margin-left: 17px; width: 1314px; font-size: 19.85px; color: #686b6e; white-space: nowrap; line-height: 42px; padding-top: 1px; }
.url b { color: #202124; font-weight: 400; }
.omnibox .o-share, .omnibox .o-star { fill: none; stroke: #5f6368; stroke-width: 1.7; }
.omnibox .o-star { margin-left: 24px; stroke-width: 2; }
.actions { display: grid; grid-template-columns: repeat(5, 48px); justify-items: center; align-items: center; margin-left: 9px; }
.avatar { width: 33px; height: 33px; border-radius: 50%; background: #512da8; color: #fff; font: 16px/33px Roboto, sans-serif; text-align: center; }

/* Bookmarks */
.bookmarks { height: 53px; flex: none; border-bottom: 2px solid #dadada; display: grid; align-items: center; font-size: 17.1px; padding: 0 0 5px 21px; white-space: nowrap; grid-template-columns: 129px 207px 119px 117px 229px 165px 126px 228px 158px 106px 276px auto; }
.bookmarks a { display: flex; align-items: center; gap: 12px; }
.more { font-size: 20px; font-weight: 600; color: #3c4043; }

/* Tab sharing bar */
.sharebar { height: 67px; flex: none; display: flex; align-items: center; padding: 0 0 1px 24px; }
.share-text { font-size: 18.7px; margin-left: 24px; width: 333px; white-space: nowrap; }
.btn { height: 48px; border-radius: 6px; font-weight: 600; font-size: 17.1px; }
.btn-stop { width: 152px; background: #1a73e8; color: #fff; }
.btn-view { width: 272px; margin-left: 12px; border: 1px solid #dadce0; background: #fff; color: #1a67d8; }

/* Shared tab content */
.stage { position: relative; height: 798px; flex: none; background: #333; display: flex; justify-content: center; }
.capture-frame { position: absolute; inset: 1px 0 0; border: 7px solid rgba(28, 108, 228, .52); border-top-width: 6px; }
.player { position: relative; width: 1276px; margin-right: 2px; display: flex; flex-direction: column; overflow: hidden; background: #17181b; }
.letterbox { height: 40px; flex: none; }

.word { height: 61px; flex: none; background: #2a559b; color: #e3e8f1; font-size: 10.9px; border-bottom: 1px solid #8aa0c8; }
.word-title { display: flex; height: 29px; align-items: center; }
.quick { display: flex; gap: 14px; padding-left: 20px; width: 591px; }
.quick svg { width: 16px; height: 16px; fill: none; stroke: #c8cdd8; stroke-width: 1.6; }
.word-doc { width: 461px; font-size: 11.2px; }
.signin { width: 55px; height: 19px; background: #f0f0f0; color: #444c60; text-align: center; line-height: 18px; }
.word-buttons { display: flex; gap: 29.5px; margin-left: 23px; }
.word-buttons svg { width: 14px; height: 14px; fill: none; stroke: #e3e8f1; stroke-width: 1.2; }
.ribbon { display: grid; align-items: center; height: 31px; padding-left: 19px; grid-template-columns: 50px 56px 53px 51px 60px 58px 81px 67px 61px 49px 49px 67px 25px 475px 20px auto; padding-top: 2px; }
.ribbon span { white-space: nowrap; }
.ribbon svg { fill: none; stroke: #e3e8f1; stroke-width: 1.2; }

.desk { height: 610px; flex: none; background: #e6e6e8; padding-left: 251px; border-right: 4px solid #f3f3f4; overflow: hidden; }
.page { position: relative; width: 770px; height: 610px; padding: 63px 0 0 90px; background: #fff; border: solid #cfcfd1; border-width: 0 1px; color: #222; font: 17px/23.5px Lato, sans-serif; letter-spacing: -.29px; white-space: nowrap; }
.page h1, .page h2, .page h3, .page p { margin: 0; }
.page h1 { font: 400 23.5px/30px Lato, sans-serif; color: #f0301c; letter-spacing: -.15px; }
.page h3 { font: 700 13px/18px Lato, sans-serif; letter-spacing: 0; margin-top: 41px; color: #111; }
.page .arial { font: 17.6px/22px "Liberation Sans", Arial, sans-serif; letter-spacing: 0; color: #3a3a3a; margin-top: 1px; }
.page .after-arial { margin-top: 9px; letter-spacing: -.27px; }
.page h2 { font: 700 17px/24px Lato, sans-serif; margin-top: 28px; color: #000; }
.page .indented { text-indent: 75px; }
.page .ports { margin-top: 23px; }
.page .domain { margin-top: 33px; letter-spacing: -.3px; }
.page .build { margin-top: 43px; letter-spacing: -.25px; }
.ibeam { position: absolute; left: 169px; top: 153px; fill: none; stroke: #333; stroke-width: 1; }

.word-status { height: 20px; flex: none; background: #f2f1f2; border-top: 1px solid #d5d5d7; display: flex; align-items: center; color: #444; font-size: 10.6px; line-height: 16px; white-space: nowrap; padding: 0 0 2px 7px; }
.pages { width: 72px; flex: none; }
.words { width: 68px; flex: none; }
.word-status svg { fill: none; stroke: #666; stroke-width: 1; }
.views { display: flex; flex: none; margin: 0 0 -2px 845px; align-self: stretch; }
.views span { width: 38px; display: flex; align-items: center; justify-content: center; }
.views .view-on { background: #c6c6c8; }
.zoom { display: flex; flex: none; align-items: center; gap: 5px; margin-left: 6px; }
.track { width: 94px; height: 1px; background: #999; }
.thumb { display: block; width: 4px; height: 12px; margin: -6px 0 0 46px; background: #555; }
.pct { margin-left: 5px; }
.zoom span { font-size: 12px; }
.zoom .pct { font-size: 10.6px; }

.inner-bar { height: 27px; flex: none; display: flex; background: #22333f; overflow: hidden; color: #d9dde0; }
.inner-start { width: 45px; flex: none; padding: 13px 0 0 15px; }
.inner-search { width: 325px; flex: none; display: flex; gap: 11px; background: linear-gradient(#efefef 25%, #a9a9a9); color: #4a4a4a; font-size: 13.1px; padding: 11px 0 0 13px; line-height: 16px; }
.inner-search svg { fill: none; stroke: #444; stroke-width: 1.4; }
.inner-apps { display: flex; flex: none; }
.inner-apps span { width: 46.4px; height: 27px; padding: 8px 0 0 11px; }
.inner-apps svg { width: 23px; height: 23px; }
.inner-apps .inner-on { background: #465360; }
.pale { color: #d9dde0; }
.inner-tray { display: flex; flex: none; margin-left: 121px; gap: 13px; padding-top: 13px; }
.inner-tray > svg:first-child { margin-right: 4px; margin-left: 3px; }
.inner-clock { font-size: 10.4px; line-height: 14px; margin: -8px 0 0 1px; width: 60px; white-space: nowrap; }
.inner-notes { margin: -3px 0 0 -8px; }

.controls { height: 40px; flex: none; display: flex; align-items: center; padding: 0 0 12px 24px; background: #1a1b1e; }
.ring { margin-left: 24px; fill: none; stroke: #d1d7dc; stroke-width: 2.3; }
.ring-fwd { margin-left: 14px; }
.ring .tip { fill: #d1d7dc; stroke: none; }
.rate { width: 53px; height: 21px; margin-left: 14px; background: #f7f9fa; color: #1c1d1f; font: 700 14px/21px Inter, sans-serif; text-align: center; }
.elapsed { margin-left: 18px; color: #fff; font: 700 15px Inter, sans-serif; white-space: nowrap; }
.controls-right { display: flex; align-items: center; gap: 20px; margin-left: auto; padding-right: 26px; }

/* Overlays on the video picture */
.shade { position: absolute; inset: 40px 0 auto; height: 100px; background: linear-gradient(rgba(20, 20, 22, .5), rgba(20, 20, 22, .14) 55%, transparent); }
.lecture { position: absolute; left: 26px; top: 28px; margin: 0; color: #fff; font: 400 26px/34px "Liberation Sans", Arial, sans-serif; letter-spacing: .45px; white-space: nowrap; }
.arrow { position: absolute; top: 372px; width: 31px; height: 54px; background: #1c1d1f; border: 1px solid #55575a; display: flex; align-items: center; justify-content: center; }
.arrow svg { fill: none; stroke: #fff; stroke-width: 2.8; }
.arrow-prev { left: 0; border-left: 0; }
.arrow-next { right: 0; border-right: 0; }
.watermark { position: absolute; left: 970px; top: 697px; color: rgba(70, 70, 72, .8); font: 22px/30px "DejaVu Serif", serif; letter-spacing: -1px; white-space: nowrap; }
.brand { position: absolute; right: 8px; top: 732px; color: rgba(255, 255, 255, .45); font: 14px/20px Lato, sans-serif; }
.progress { position: absolute; left: 13px; top: 737px; width: 1250px; height: 7px; background: rgba(247, 249, 250, .8); display: flex; }
.played { width: 114px; background: #a435f0; }
.buffered { width: 115px; background: #6a6f73; }

/* Desktop taskbar */
.taskbar { height: 60px; flex: none; display: flex; background: #d6d6d8; color: #000; }
.app { width: 75px; flex: none; display: flex; align-items: center; justify-content: center; position: relative; }
.app:nth-child(1) { width: 72px; }
.app:nth-child(2) { width: 71px; padding-right: 1px; }
.app:nth-child(3) { width: 76px; padding-right: 2px; }
.run::after { content: ""; position: absolute; bottom: 0; left: 8px; width: 61px; height: 3px; background: #0078d7; }
.app-focus::before { content: ""; position: absolute; inset: 0 0 0 2px; background: #ededee; border-bottom: 3px solid #0078d7; }
.app-focus svg { position: relative; }
.weather { display: flex; align-items: center; width: 131px; margin-left: 67px; font-size: 19.8px; gap: 12px; letter-spacing: -.2px; }
.tray { display: flex; align-items: center; flex: 1; }
.tray > svg { fill: none; stroke: #000; stroke-width: 1.4; }
.t1 { margin-left: 1px; }
.t2 { margin-left: 18px; }
.t3 { margin-left: 14px; }
.t4 { margin-left: 16px; }
.t5 { margin-left: 16px; }
.t6 { margin-left: 12px; margin-top: -3px; }
.t7 { margin-left: 15px; }
.t8 { margin-left: 13px; }
.lang { margin-left: 16px; font-size: 16.3px; width: 49px; }
.clock { width: 103px; flex: none; text-align: center; font-size: 17.6px; line-height: 27px; letter-spacing: .1px; }
.notes { position: relative; margin: -8px 0 0 24px; }
.count { position: absolute; left: 11px; top: 13px; width: 25px; height: 25px; border: 1px solid #777; border-radius: 50%; background: #d6d6d8; font-size: 16px; line-height: 23px; text-align: center; }
.taskbar::after { content: ""; width: 1px; background: #a8a8aa; margin-right: 6px; }
```
